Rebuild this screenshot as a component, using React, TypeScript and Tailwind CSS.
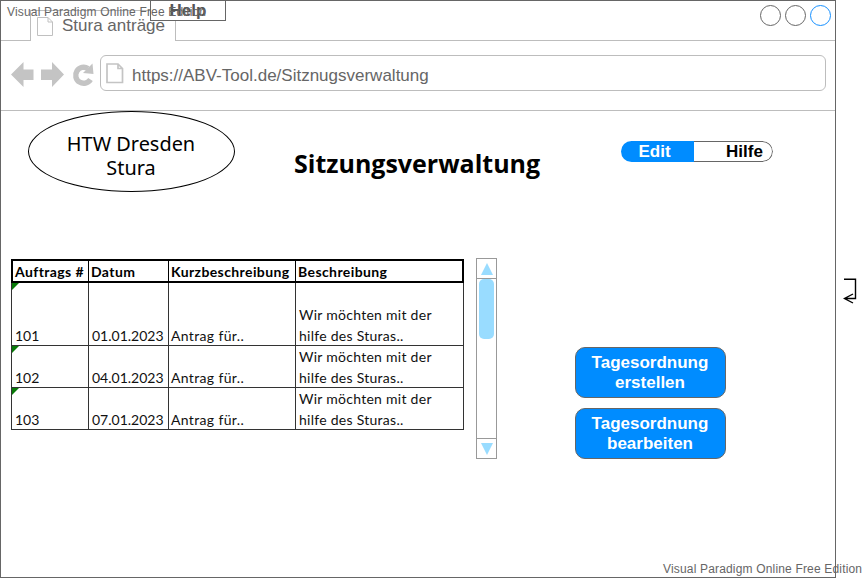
import type { ReactNode } from "react";

const rows = [
  { id: "101", date: "01.01.2023", height: "h-[63px]", shift: "translate-y-px" },
  { id: "102", date: "04.01.2023", height: "h-[42px]", shift: "" },
  { id: "103", date: "07.01.2023", height: "h-[42px]", shift: "" },
];

function PageIcon({ thick = false }: { thick?: boolean }) {
  return thick ? (
    <svg width="18" height="21" viewBox="0 0 18 21" fill="none" stroke="#c4c4c4" strokeWidth="1.7">
      <path d="M1 1H12L16.5 5.5V19.5H1Z M12 1V5.5H16.5" />
    </svg>
  ) : (
    <svg width="16" height="19" viewBox="0 0 16 19" fill="none" stroke="#c0c0c0" strokeWidth="1">
      <path d="M.5.5H11L15.5 5V18.5H.5Z M11 .5V5H15.5" />
    </svg>
  );
}

function TitleBar() {
  return (
    <div className="flex h-10 items-end">
      <div className="h-10 w-[29px] border-b border-[#bdbdbd]" />
      <div className="flex h-[31px] w-[146px] items-start border-x border-t border-[#bdbdbd] pl-[6px] pt-[6px]">
        <PageIcon />
        <span className="ml-[9px] text-[17px] leading-[19px] -mt-px whitespace-nowrap text-[#666]">Stura anträge</span>
      </div>
      <div className="flex h-10 flex-1 justify-end border-b border-[#bdbdbd] pr-[3px] pt-1">
        <svg width="73" height="22" viewBox="0 0 73 22" fill="none" stroke="#666">
          <circle cx="11.5" cy="10.5" r="10" />
          <circle cx="36.5" cy="10.5" r="10" />
          <circle cx="61.5" cy="10.5" r="10" stroke="#1690ff" />
        </svg>
      </div>
    </div>
  );
}

function NavBar() {
  return (
    <div className="flex h-[70px] items-start border-b border-[#bdbdbd] pt-[14px]">
      <svg className="ml-[10px] mt-[6px]" width="86" height="28" viewBox="0 0 86 28" fill="#c4c4c4">
        <path d="M0 13.5L12.5 1V8.5H22.5V19H12.5V26Z" />
        <path d="M53 13.5L41 1V8.5H30V19H41V26Z" />
        <path d="M79.5 18.5A8 8 0 1 1 77 7.5" fill="none" stroke="#c4c4c4" strokeWidth="5.4" />
        <path d="M81.5 2.5L82.5 13L72 12Z" />
      </svg>
      <div className="ml-[3px] flex h-9 w-[726px] items-center rounded-[6px] border border-[#bdbdbd] pl-[5px]">
        <PageIcon thick />
        <span className="ml-[8px] mt-[5px] text-[17px] leading-5 text-[#666]">https://ABV-Tool.de/Sitznugsverwaltung</span>
      </div>
    </div>
  );
}

function HeaderCell({ children, last }: { children: ReactNode; last?: boolean }) {
  return <div className={`flex h-[20px] items-center pl-[2px] ${last ? "" : "border-r border-black"}`}>{children}</div>;
}

function RequestTable() {
  return (
    <div className="w-[453px] font-['Lato',sans-serif] text-[14px] leading-[21px] text-[#111]">
      <div className="grid grid-cols-[76px_80px_127px_auto] border-2 border-black text-[14px] font-bold tracking-[0.4px] text-black whitespace-nowrap">
        <HeaderCell><span>Auftrags #</span></HeaderCell>
        <HeaderCell><span>Datum</span></HeaderCell>
        <HeaderCell><span>Kurzbeschreibung</span></HeaderCell>
        <HeaderCell last><span>Beschreibung</span></HeaderCell>
      </div>
      {rows.map((row) => (
        <div key={row.id} className={`grid ${row.height} grid-cols-[78px_80px_127px_auto] border-b border-[#333]`}>
          <div className="relative flex items-end border-x border-[#333] pl-[3px]">
            <svg className="absolute left-0 top-0" width="7" height="7"><path d="M0 0H7L0 7Z" fill="#087a08" /></svg>
            <span className={row.shift}>{row.id}</span>
          </div>
          <div className="flex items-end whitespace-nowrap border-r border-[#333] pl-[3px]">
            <span className={row.shift}>{row.date}</span>
          </div>
          <div className="flex items-end whitespace-nowrap border-r border-[#333] pl-[2px] tracking-[0.35px]">
            <span className={row.shift}>Antrag für..</span>
          </div>
          <div className="flex items-end whitespace-nowrap border-r border-[#333] pl-[3px] tracking-[0.27px]">
            <p className={row.shift}>Wir möchten mit der<br />hilfe des Sturas..</p>
          </div>
        </div>
      ))}
    </div>
  );
}

function ScrollBar() {
  return (
    <div className="ml-[12px] -mt-px flex h-[201px] w-[21px] flex-col border border-[#999]">
      <div className="flex h-5 items-center justify-center border-b border-[#999]">
        <svg width="12" height="12"><path d="M6 0L12 12H0Z" fill="#99dcff" /></svg>
      </div>
      <div className="flex flex-1 justify-center">
        <div className="h-[60px] w-[15px] rounded-[5px] bg-[#99dcff]" />
      </div>
      <div className="flex h-5 items-center justify-center border-t border-[#999]">
        <svg width="12" height="12"><path d="M0 0H12L6 12Z" fill="#99dcff" /></svg>
      </div>
    </div>
  );
}

function ActionButton({ children }: { children: ReactNode }) {
  return (
    <button className="h-[51px] w-[151px] rounded-[10px] border border-[#666] bg-[#008cff] pr-px text-center text-[17px] font-bold leading-5 text-white">
      {children}
    </button>
  );
}

export default function App() {
  return (
    <div className="relative h-[578px] w-[867px] overflow-hidden bg-white font-['Liberation_Sans',Arial,sans-serif]">
      <div className="flex h-[578px] w-[836px] flex-col border border-[#666]">
        <TitleBar />
        <NavBar />
        <div className="flex h-[147px] items-start">
          <div className="ml-[27px] h-[81px] w-[207px] rounded-[50%] border border-black pr-px pt-[20px] text-center font-['Noto_Sans',sans-serif] text-[19.9px] leading-6">
            HTW Dresden<br />Stura
          </div>
          <h1 className="ml-[59px] mt-[35px] w-[246px] whitespace-nowrap font-['Open_Sans',sans-serif] text-[25px] font-bold leading-[34px]">Sitzungsverwaltung</h1>
          <div className="ml-[81px] mt-[30px] flex h-[21px] w-[152px] overflow-hidden rounded-full text-[17px] font-bold leading-[21px]">
            <div className="w-[73px] bg-[#008cff] pl-[17.5px] text-white">Edit</div>
            <div className="flex-1 rounded-r-full border border-l-0 border-[#666] pl-[32px] leading-[19px]">Hilfe</div>
          </div>
        </div>
        <div className="flex items-start pl-[10px] pt-px">
          <RequestTable />
          <ScrollBar />
          <div className="ml-[78px] mt-[88px] flex flex-col gap-[10px]">
            <ActionButton>Tagesordnung<br />erstellen</ActionButton>
            <ActionButton>Tagesordnung<br />bearbeiten</ActionButton>
          </div>
        </div>
      </div>
      <div className="absolute left-[150px] top-0 h-[21px] w-[76px] border border-[#666] bg-white text-center text-[17px] font-bold leading-[20px] text-[#555]">Help</div>
      <div className="absolute left-[7px] top-[4px] whitespace-nowrap text-[12px] leading-4 tracking-[0.17px] text-[#666]">Visual Paradigm Online Free Edition</div>
      <div className="absolute left-[663px] top-[561px] whitespace-nowrap text-[12px] leading-4 tracking-[0.17px] text-[#666]">Visual Paradigm Online Free Edition</div>
      <svg className="absolute left-[842px] top-[276px]" width="18" height="30" fill="none" stroke="black" strokeWidth="1.4">
        <path d="M2 3.3H13.5V22.5H3M11 18L2.5 22.5L11 27" />
      </svg>
    </div>
  );
}
